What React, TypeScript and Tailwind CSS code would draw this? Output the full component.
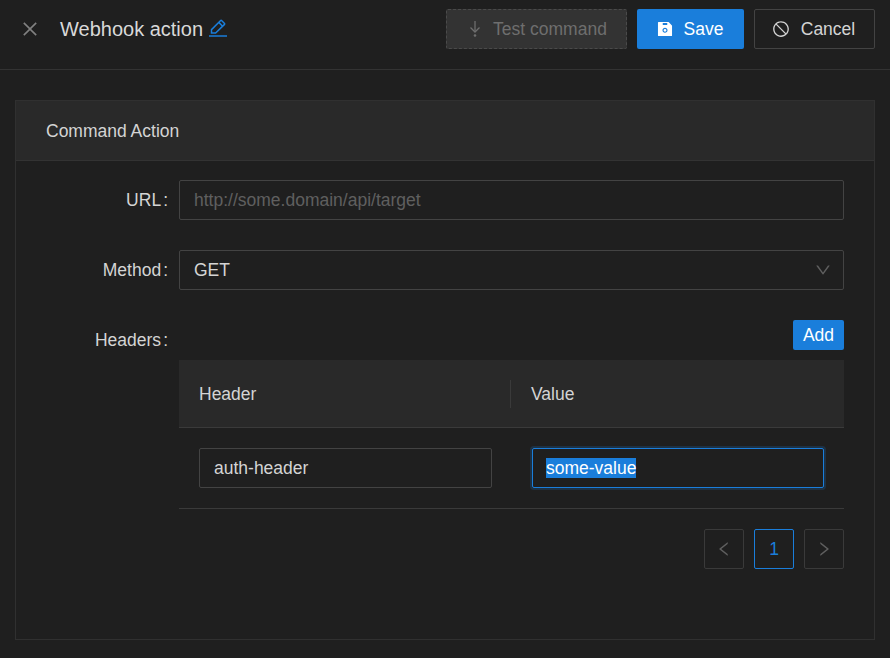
import { AiOutlineClose, AiFillSave, AiOutlineStop, AiOutlineDown, AiOutlineLeft, AiOutlineRight } from "react-icons/ai";

const TestIcon = () => (
  <svg viewBox="0 0 16 18" className="h-[18px] w-4 translate-x-[1px]" fill="none" stroke="currentColor" strokeWidth="1.3">
    <path d="M8 1V12" />
    <path d="M3.5 7.5L8 12L12.5 7.5" />
    <circle cx="8" cy="15.5" r="1.3" fill="currentColor" stroke="none" />
  </svg>
);

const EditIcon = () => (
  <svg viewBox="0 0 18 18" className="h-[18px] w-[18px]" fill="none" stroke="currentColor" strokeWidth="1.5">
    <path d="M2.5 14V10.6L11.4 1.7C11.8 1.3 12.4 1.3 12.8 1.7L15.3 4.2C15.7 4.6 15.7 5.2 15.3 5.6L6.6 14H2.5Z" />
    <path d="M9.8 3.4L13.6 7.2" />
    <path d="M0 17H18" />
  </svg>
);

const FormLabel = ({ children }: { children: string }) => (
  <div className="flex h-10 w-[163px] shrink-0 items-center justify-end pr-[11px] pt-[1px] text-[#d4d4d4]">
    <span>{children}</span>
    <span className="ml-[2px]">:</span>
  </div>
);

const App = () => {
  return (
    <div className="h-[658px] w-[890px] overflow-hidden bg-[#1f1f1f] font-['Liberation_Sans',sans-serif] text-[17.5px] text-[#d4d4d4]">
      {/* top bar */}
      <header className="flex h-[70px] items-start justify-between border-b border-[#333333] pl-5 pr-[15px] pt-[9px]">
        <div className="flex h-10 items-center">
          <AiOutlineClose className="h-5 w-5 text-[#808080]" />
          <span className="ml-5 text-[20px] text-[#d9d9d9]">Webhook action</span>
          <span className="ml-[6px] -translate-y-[1px] text-[#1a7edb]">
            <EditIcon />
          </span>
        </div>
        <div className="flex items-center gap-[10px]">
          <button className="flex h-10 w-[181px] items-center justify-center gap-[11px] rounded-[2px] border border-dashed border-[#4a4a4a] bg-[#333333] text-[#6e6e6e]">
            <TestIcon />
            Test command
          </button>
          <button className="flex h-10 w-[107px] items-center justify-center gap-[10px] rounded-[2px] bg-[#1a7edb] pr-[2px] text-white">
            <AiFillSave className="h-[18px] w-[18px]" />
            Save
          </button>
          <button className="flex h-10 w-[121px] items-center justify-center gap-[11px] rounded-[2px] border border-[#434343] pr-[2px] text-[#d4d4d4]">
            <AiOutlineStop className="h-[18px] w-[18px]" />
            Cancel
          </button>
        </div>
      </header>

      {/* card */}
      <section className="mx-[15px] mt-[30px] h-[540px] border border-[#303030]">
        <div className="flex h-[60px] items-center border-b border-[#333333] bg-[#292929] pl-[30px] pt-[1px] text-[#d4d4d4]">
          Command Action
        </div>
        <div className="pr-[30px] pt-[19px]">
          <div className="flex">
            <FormLabel>URL</FormLabel>
            <div className="flex h-10 flex-1 items-center rounded-[2px] border border-[#434343] px-[14px] text-[#5f5f5f]">
              http://some.domain/api/target
            </div>
          </div>
          <div className="mt-[30px] flex">
            <FormLabel>Method</FormLabel>
            <div className="flex h-10 flex-1 items-center justify-between rounded-[2px] border border-[#434343] pl-[14px] pr-[11px]">
              GET
              <AiOutlineDown className="h-[18px] w-[18px] text-[#5f5f5f]" />
            </div>
          </div>
          <div className="mt-[30px] flex">
            <FormLabel>Headers</FormLabel>
            <div className="flex-1">
              <div className="flex justify-end">
                <button className="h-[30px] w-[51px] rounded-[2px] bg-[#1a7edb] text-white">Add</button>
              </div>
              <div className="mt-[10px] flex h-[68px] items-center border-b border-[#3a3a3a] bg-[#292929]">
                <div className="w-[331px] pl-5 pt-[2px]">Header</div>
                <div className="h-7 w-px bg-[#3a3a3a]" />
                <div className="pl-5 pt-[2px]">Value</div>
              </div>
              <div className="flex h-[81px] items-center border-b border-[#3a3a3a] pl-5 pr-5">
                <div className="flex h-10 w-[293px] items-center rounded-[2px] border border-[#434343] px-[14px]">
                  auth-header
                </div>
                <div className="ml-10 flex h-10 flex-1 items-center rounded-[2px] border border-[#1a7edb] px-[13px] text-white shadow-[0_0_0_2px_rgba(26,126,219,0.2)]">
                  <span className="inline-block h-5 bg-[#1a7edb] leading-5">some-value</span>
                </div>
              </div>
              <div className="mt-5 flex justify-end gap-[10px]">
                <div className="flex h-10 w-10 items-center justify-center rounded-[2px] border border-[#3a3a3a] text-[#5f5f5f]">
                  <AiOutlineLeft className="h-[18px] w-[18px]" />
                </div>
                <div className="flex h-10 w-10 items-center justify-center rounded-[2px] border border-[#1a7edb] text-[#1a7edb]">1</div>
                <div className="flex h-10 w-10 items-center justify-center rounded-[2px] border border-[#3a3a3a] text-[#5f5f5f]">
                  <AiOutlineRight className="h-[18px] w-[18px]" />
                </div>
              </div>
            </div>
          </div>
        </div>
      </section>
    </div>
  );
};

export default App;
